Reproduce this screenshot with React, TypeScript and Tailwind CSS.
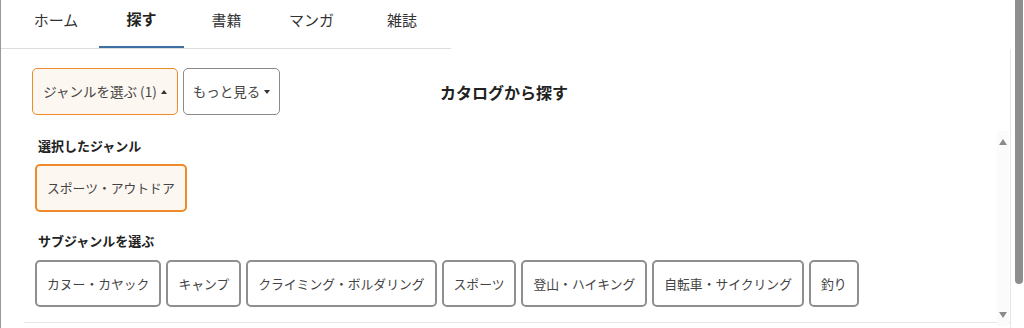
import React from "react";

const tabs = [
  { label: "ホーム", w: "w-[86px]", active: false },
  { label: "探す", w: "w-[85px]", active: true },
  { label: "書籍", w: "w-[85px]", active: false },
  { label: "マンガ", w: "w-[85px]", active: false },
  { label: "雑誌", w: "w-[96px]", active: false },
];

const subs = [
  "カヌー・カヤック",
  "キャンプ",
  "クライミング・ボルダリング",
  "スポーツ",
  "登山・ハイキング",
  "自転車・サイクリング",
  "釣り",
];

export default function App() {
  return (
    <div className="w-[1024px] h-[328px] flex overflow-hidden bg-white text-[#333] font-['Noto_Sans_CJK_JP',_'Noto_Sans',_sans-serif]">
      <div className="w-[1011px] h-full border-l border-[#999] flex flex-col">
        <div className="flex w-[450px] h-[49px] border-b border-[#ddd] pl-[12px]">
          {tabs.map((t) => (
            <div
              key={t.label}
              className={`${t.w} h-full flex items-center justify-center text-[15px] pb-[7px] ${
                t.active ? "font-bold text-[#222] border-b-2 border-[#3d6fa3]" : "text-[#333]"
              }`}
            >
              {t.label}
            </div>
          ))}
        </div>
        <div className="flex-1 relative border-r border-[#e6e6e6] flex flex-col">
          <div className="flex items-center mt-[19px] ml-[31px]">
            <div className="w-[146px] h-[47px] flex items-center justify-center rounded-[5px] border border-[#ee8a2a] bg-[#fdf7f1] text-[13.5px] text-[#444]">
              ジャンルを選ぶ (1)
              <span className="ml-[4px] inline-block w-0 h-0 border-l-[3px] border-r-[3px] border-b-[4px] border-l-transparent border-r-transparent border-b-[#333]" />
            </div>
            <div className="ml-[5px] w-[97px] h-[47px] flex items-center justify-center rounded-[5px] border border-[#8a8a8a] bg-white text-[13.5px] text-[#444]">
              もっと見る
              <span className="ml-[4px] inline-block w-0 h-0 border-l-[3px] border-r-[3px] border-t-[4px] border-l-transparent border-r-transparent border-t-[#333]" />
            </div>
            <div className="ml-[160px] text-[16px] font-bold text-[#222]">カタログから探す</div>
          </div>

          <div className="ml-[37px] mt-[22px] text-[13px] font-bold text-[#222] leading-[18px]">選択したジャンル</div>
          <div className="flex ml-[34px] mt-[9px]">
            <div className="h-[48px] px-[10px] flex items-center rounded-[5px] border-2 border-[#ee8a2a] bg-[#fdf7f1] text-[12.8px] text-[#444]">
              スポーツ・アウトドア
            </div>
          </div>

          <div className="ml-[37px] mt-[20px] text-[13px] font-bold text-[#222] leading-[18px]">サブジャンルを選ぶ</div>
          <div className="flex gap-[5px] ml-[34px] mt-[10px]">
            {subs.map((s) => (
              <div
                key={s}
                className="h-[47px] px-[10px] flex items-center rounded-[5px] border-2 border-[#8f8f8f] bg-white text-[12.8px] text-[#444]"
              >
                {s}
              </div>
            ))}
          </div>

          <div className="mt-auto mb-[5px] ml-[23px] border-t border-[#e6e6e6]" />

          <div className="absolute right-[1px] top-[82px] bottom-[2px] w-[12px] bg-[#fbfbfb] flex flex-col items-center justify-between py-[8px]">
            <span className="inline-block w-0 h-0 border-l-[4px] border-r-[4px] border-b-[6px] border-l-transparent border-r-transparent border-b-[#8a8a8a]" />
            <span className="inline-block w-0 h-0 border-l-[4px] border-r-[4px] border-t-[6px] border-l-transparent border-r-transparent border-t-[#8a8a8a]" />
          </div>
        </div>
      </div>
      <div className="w-[13px] h-full flex justify-center pl-[2px]">
        <div className="w-[8px] h-[284px] bg-[#8e8e8e] rounded-b-[4px]" />
      </div>
    </div>
  );
}
